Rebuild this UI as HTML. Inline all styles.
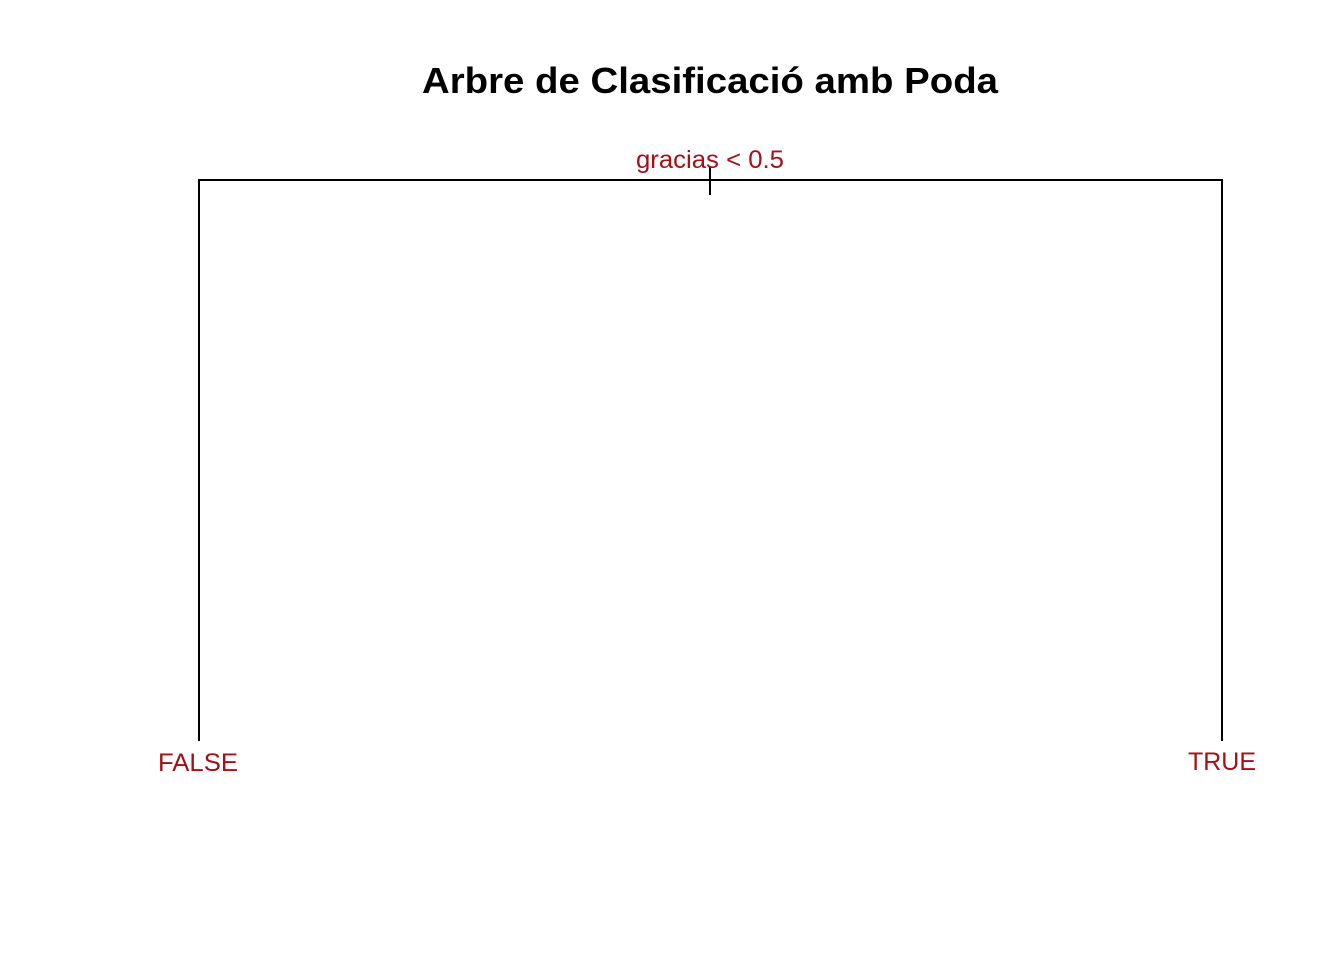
<!DOCTYPE html>
<html><head><style>body{margin:0;background:#fff}</style></head><body>
<svg width="1344" height="960" xmlns="http://www.w3.org/2000/svg" font-family="Liberation Sans, sans-serif">
<rect width="1344" height="960" fill="#fff"/>
<text x="422" y="93" font-size="36" font-weight="bold" textLength="576" lengthAdjust="spacingAndGlyphs">Arbre de Clasificació amb Poda</text>
<g stroke="#000" stroke-width="2" fill="none">
<path d="M199 741 V180 H1222 V741"/>
<path d="M710 166 V195"/>
</g>
<g fill="#A50F15" font-size="25">
<text x="636" y="168" textLength="148" lengthAdjust="spacingAndGlyphs">gracias &lt; 0.5</text>
<text x="158" y="771" textLength="80" lengthAdjust="spacingAndGlyphs">FALSE</text>
<text x="1188" y="770" textLength="68" lengthAdjust="spacingAndGlyphs">TRUE</text>
</g>
</svg>
</body></html>
